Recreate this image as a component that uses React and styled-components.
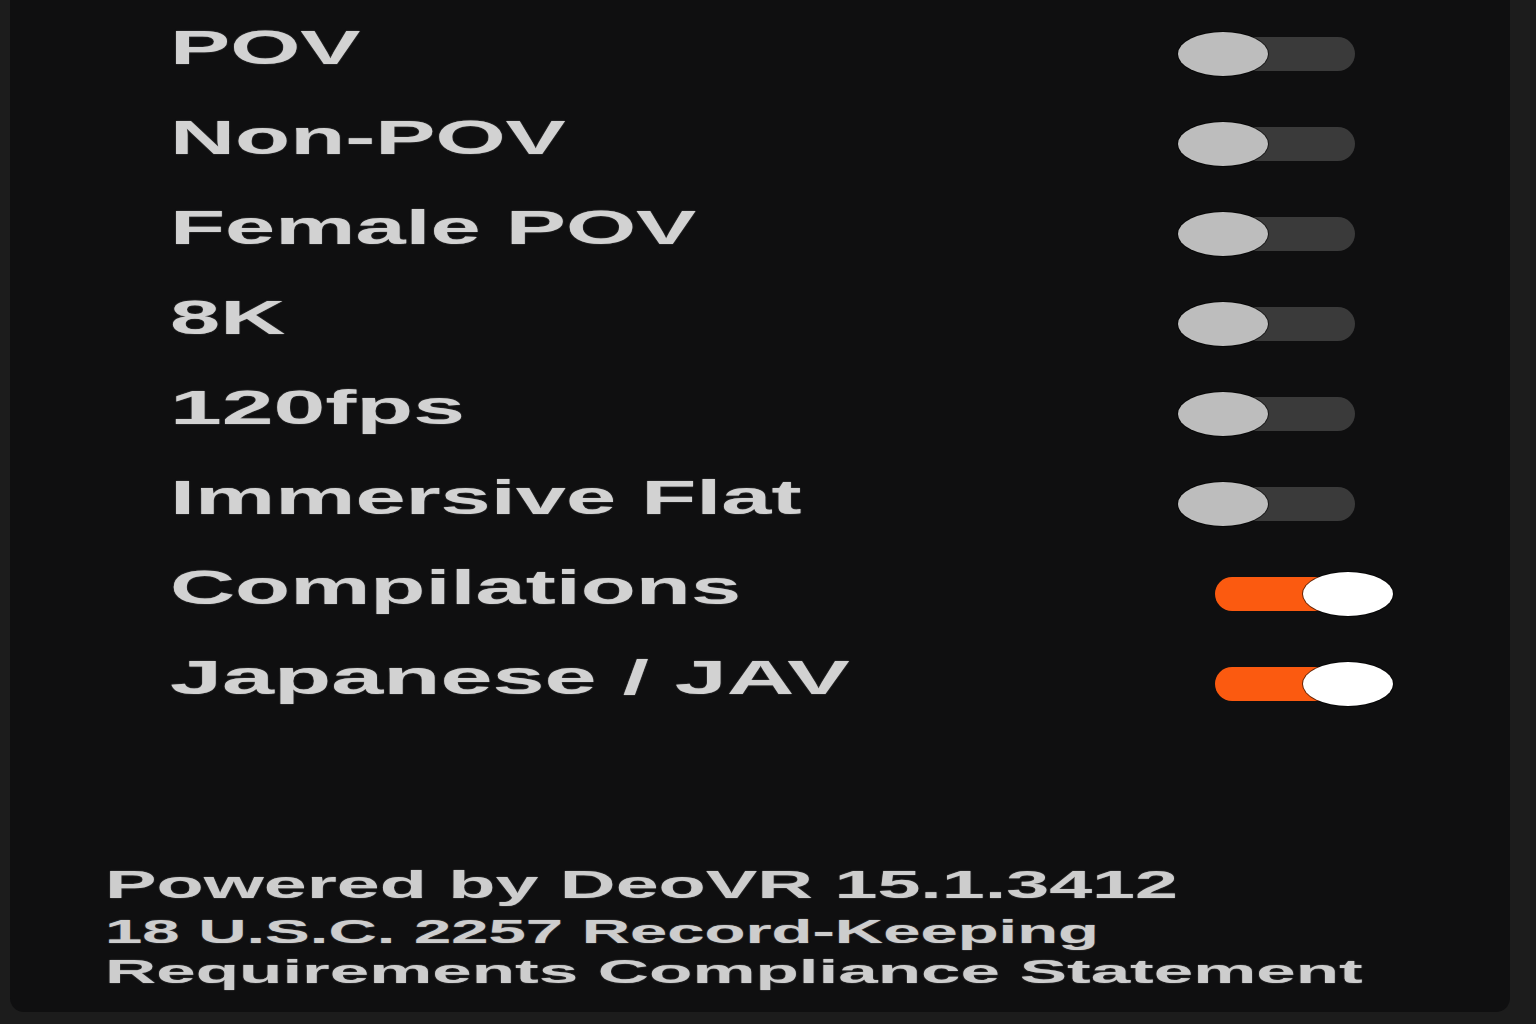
import React from "react";
import styled, { createGlobalStyle } from "styled-components";

const Global = createGlobalStyle`
  html, body { margin: 0; padding: 0; background: #1c1c1c; }
  body { font-family: "Liberation Sans", Arial, sans-serif; }
`;

const Page = styled.div`
  width: 1536px;
  height: 1024px;
  background: #1c1c1c;
  overflow: hidden;
`;

const Panel = styled.div`
  margin-left: 10px;
  width: 1500px;
  height: 1012px;
  background: #0f0f10;
  border-radius: 0 0 14px 14px;
  display: flex;
  flex-direction: column;
  padding-top: 5px;
  box-sizing: border-box;
`;

const List = styled.div`
  display: flex;
  flex-direction: column;
`;

const Row = styled.div`
  height: 90px;
  display: flex;
  align-items: center;
  justify-content: space-between;
  padding-left: 160px;
  padding-right: 155px;
`;

const Label = styled.span`
  display: inline-block;
  font-size: 49px;
  font-weight: 700;
  color: #d2d2d2;
  line-height: 1;
  white-space: nowrap;
  text-shadow: 0 0 1px rgba(210, 210, 210, 0.6);
  transform: scaleX(${(p) => p.$scale || 1.84});
  transform-origin: left center;
  margin-top: -6px;
`;

const Track = styled.div`
  position: relative;
  width: 140px;
  height: 34px;
  border-radius: 17px;
  background: ${(p) => (p.$on ? "#fb5a10" : "#3a3a3a")};
  margin-top: 8px;
`;

const Knob = styled.div`
  position: absolute;
  top: -5px;
  ${(p) => (p.$on ? "right: -38px;" : "left: -37px;")}
  width: 90px;
  height: 44px;
  border-radius: 50%;
  background: ${(p) => (p.$on ? "#ffffff" : "#bdbdbd")};
  box-shadow: 0 0 0 1px rgba(0, 0, 0, 0.6);
`;

const Footer = styled.div`
  margin-top: auto;
  padding-left: 95px;
  padding-bottom: 20px;
  display: flex;
  flex-direction: column;
`;

const FootLine = styled.div`
  font-weight: 700;
  color: #cdcdcd;
  white-space: nowrap;
  text-shadow: 0 0 1px rgba(205, 205, 205, 0.6);
  font-size: ${(p) => (p.$big ? "39px" : "33px")};
  line-height: ${(p) => (p.$big ? "54px" : "40px")};
  transform: scaleX(${(p) => p.$scale});
  transform-origin: left center;
`;

const items = [
  ["POV", false],
  ["Non-POV", false],
  ["Female POV", false],
  ["8K", false],
  ["120fps", false, 1.9],
  ["Immersive Flat", false],
  ["Compilations", true],
  ["Japanese / JAV", true, 1.91],
];

function Toggle({ on }) {
  return (
    <Track $on={on}>
      <Knob $on={on} />
    </Track>
  );
}

export default function App() {
  return (
    <Page>
      <Global />
      <Panel>
        <List>
          {items.map(([name, on, scale]) => (
            <Row key={name}>
              <Label $scale={scale}>{name}</Label>
              <Toggle on={on} />
            </Row>
          ))}
        </List>
        <Footer>
          <FootLine $big $scale={1.98}>Powered by DeoVR 15.1.3412</FootLine>
          <FootLine $scale={2.03}>18 U.S.C. 2257 Record-Keeping</FootLine>
          <FootLine $scale={2.15}>Requirements Compliance Statement</FootLine>
        </Footer>
      </Panel>
    </Page>
  );
}
